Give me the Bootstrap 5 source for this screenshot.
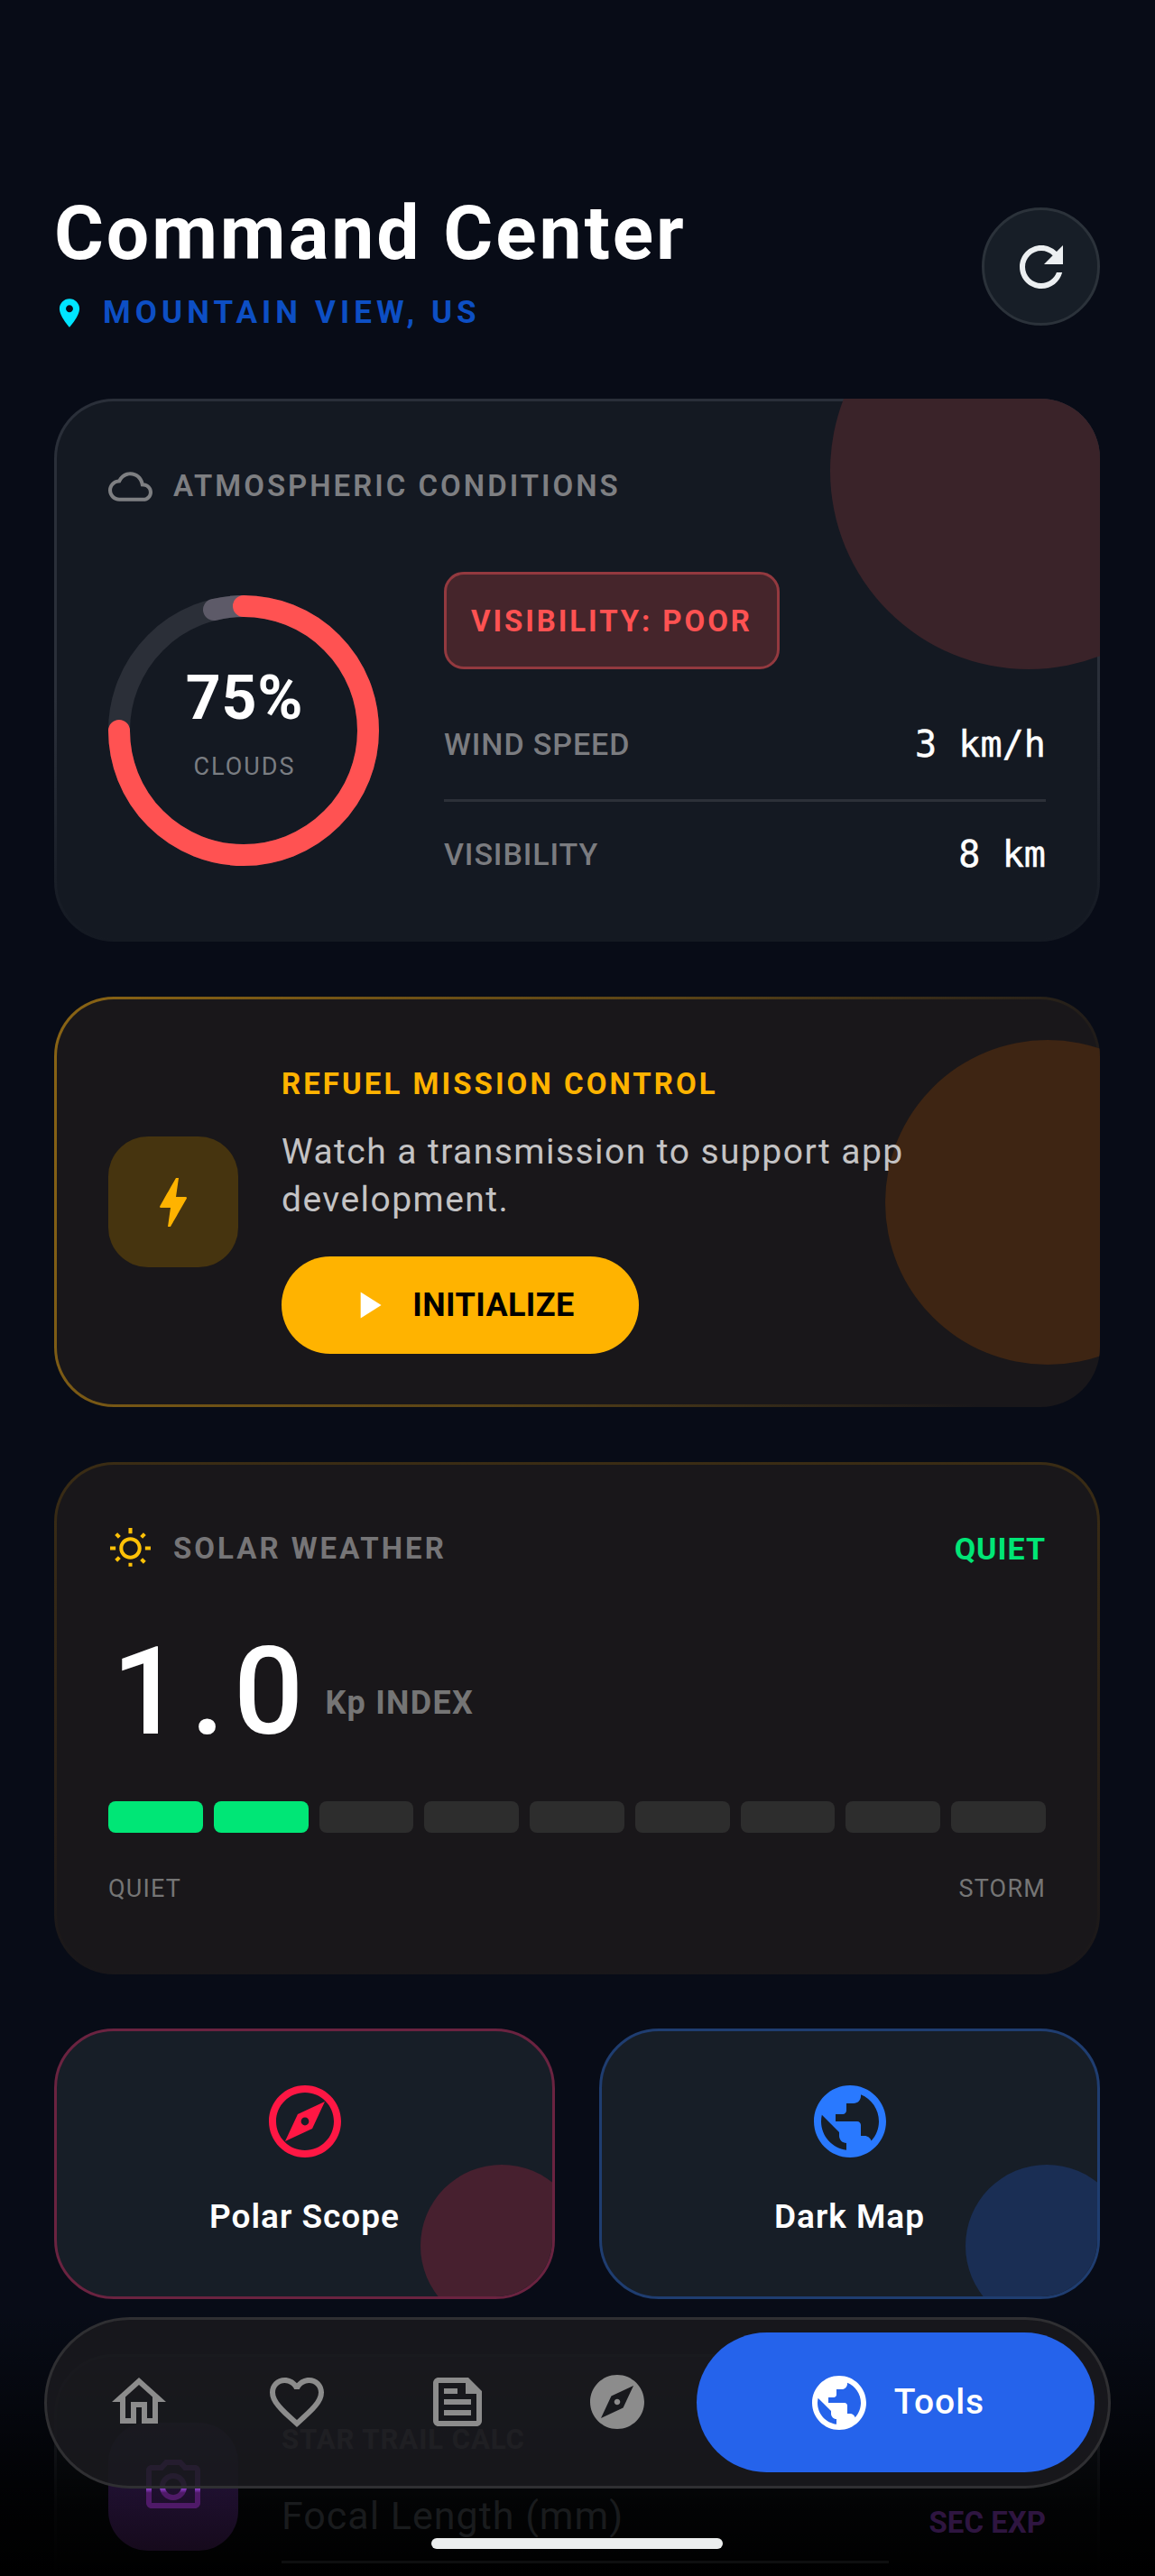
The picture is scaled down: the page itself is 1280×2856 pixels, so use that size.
<!DOCTYPE html>
<html lang="en">
<head>
  <meta charset="UTF-8">
  <title>Command Center</title>
  <link href="https://cdn.jsdelivr.net/npm/bootstrap@5.3.0/dist/css/bootstrap.min.css" rel="stylesheet">
  <style>
    html, body { height: 2856px; overflow: hidden; }
    body { background: #080c17; font-family: Roboto, "Liberation Sans", sans-serif; color: #fff; position: relative; }
    svg { display: block; fill: currentColor; flex: none; }
    .screen { padding: 209px 61px 0 60px; height: 2856px; overflow: hidden; }
    .page-title { font-size: 84px; font-weight: 700; line-height: 100px; letter-spacing: 2.9px; margin: 0; }
    .place { color: #0d4fc4; font-size: 35px; font-weight: 700; letter-spacing: 5.1px; line-height: 40px; margin-top: 18px; gap: 18px; }
    .place svg { color: #00e5ff; margin-left: -2px; }
    .refresh-btn { width: 131px; height: 131px; border-radius: 50%; background: #171e27; border: 3px solid #2b323a; color: #eceff1; margin-top: 21px; }
    .panel { position: relative; overflow: hidden; border-radius: 66px; border: 3px solid transparent; margin-top: 61px; }
    .blob { position: absolute; border-radius: 50%; }
    .panel > :not(.blob) { position: relative; }
    .panel-head { color: #7e7f82; font-size: 33px; font-weight: 600; letter-spacing: 3px; line-height: 58px; gap: 23px; }

    .air { height: 602px; padding: 65px 57px 0; margin-top: 75px; overflow: clip; overflow-clip-margin: border-box; background: linear-gradient(#141922, #141922) padding-box, linear-gradient(to bottom, #2a2f39, #2a2f39 55%, #141922) border-box; }
    .air .blob { width: 440px; height: 440px; left: 857px; top: -143px; background: #3a2329; }
    .air-body { margin-top: 66px; }
    .ring { width: 300px; height: 300px; position: relative; margin-top: 26px; }
    .ring-text { position: absolute; inset: 0; text-align: center; padding-left: 2px; }
    .ring-num { font-size: 68px; font-weight: 700; line-height: 78px; letter-spacing: .8px; margin-top: 75px; }
    .ring-lbl { font-size: 27px; letter-spacing: 2px; color: #7a7d82; line-height: 34px; margin-top: 20px; }
    .air-side { margin-left: 72px; width: 668px; }
    .vis-chip { display: inline-block; height: 108px; border-radius: 22px; border: 3px solid #93393f; background: #45252b; color: #ff5252; font-size: 33px; font-weight: 700; letter-spacing: 2.9px; line-height: 104px; padding: 0 27px; }
    .stat { font-size: 34px; font-weight: 500; letter-spacing: .9px; color: #7b7c80; }
    .stat-val { font-family: "DejaVu Sans Mono", monospace; font-size: 40px; color: #fff; font-weight: 400; letter-spacing: .1px; -webkit-text-stroke: .5px #fff; }
    .stat-a { margin-top: 60px; padding-bottom: 37px; line-height: 47px; border-bottom: 3px solid #2c3038; }
    .stat-b { padding-top: 35px; line-height: 47px; }

    .refuel { height: 455px; padding: 0 57px; overflow: clip; overflow-clip-margin: border-box; background: linear-gradient(#19171a, #19171a) padding-box, linear-gradient(115deg, #8a6414, #5a4416 50%, #19171a 90%) border-box; }
    .refuel .blob { width: 360px; height: 360px; left: 918px; top: 45px; background: #3e2513; }
    .tile-box { width: 144px; height: 145px; border-radius: 44px; }
    .bolt-box { background: #46340f; color: #ffb300; }
    .refuel-main { margin-left: 48px; padding-top: 18px; }
    .refuel-title { color: #ffb300; font-size: 33px; font-weight: 700; letter-spacing: 3.05px; line-height: 40px; }
    .refuel-text { color: #c4c3c4; font-size: 39px; letter-spacing: 1.45px; line-height: 53px; margin-top: 29px; width: 720px; }
    .go-btn { width: 396px; height: 108px; border-radius: 54px; background: #ffb300; border: 0; color: #000; font-size: 36px; font-weight: 700; letter-spacing: .4px; gap: 24px; margin-top: 36px; padding: 0; }
    .go-btn svg { color: #fff; }

    .solar { height: 568px; padding: 64px 57px 0; background: linear-gradient(#19171a, #19171a) padding-box, linear-gradient(to bottom, #3a2c14, #2a2118 60%, #19171a) border-box; }
    .solar .panel-head { font-weight: 700; color: #767577; }
    .sun { color: #ffc107; }
    .state-txt { color: #00e676; font-weight: 700; font-size: 34px; letter-spacing: 1px; }
    .kp-line { margin-top: 55px; height: 150px; gap: 14px; }
    .kp-num { font-size: 136px; font-weight: 500; letter-spacing: 10px; line-height: 150px; margin-left: 4px; }
    .kp-lbl { font-size: 36px; font-weight: 700; color: #757575; letter-spacing: 1.3px; margin-top: 24px; }
    .kp-bars { gap: 12px; margin-top: 46px; }
    .kp-bar { height: 35px; flex: 1; background: #2d2d2d; border-radius: 8px; }
    .kp-bar.on { background: #00e676; }
    .kp-ends { font-size: 27px; color: #757575; letter-spacing: 1.2px; margin-top: 45px; line-height: 34px; }

    .tile { flex: 1; height: 300px; background: #171e27; text-align: center; margin-top: 0; padding-top: 52px; }
    .tile-row { gap: 49px; margin-top: 60px; }
    .tile svg { margin: 0 auto; }
    .tile-name { font-size: 37px; font-weight: 600; letter-spacing: 1px; margin-top: 34px; line-height: 48px; color: #fff; }
    .tile .blob { width: 180px; height: 180px; left: 403px; top: 148px; }
    .tile-red { border-color: #6a2340; color: #ff1744; }
    .tile-red .blob { background: #47202f; }
    .tile-blue { border-color: #1f3d70; color: #2979ff; }
    .tile-blue .blob { background: #1a2e54; }

    /* card under the dock: bg gets the scrim, its content sits above the scrim with already dimmed colours */
    .trail { height: 260px; padding: 70px 57px 0; background: #141a22; border-color: #2a2f39; border-bottom: 0; border-radius: 66px 66px 0 0; }
    .trail > * { z-index: 1; }
    .cam-box { height: 142px; background: linear-gradient(to bottom, #26264a, #1f1030 50%, #160a1c); margin-top: 3px; flex: none; }
    .trail-body { margin-left: 48px; width: 673px; flex: none; }
    .trail-title { font-size: 31px; font-weight: 700; letter-spacing: 1px; color: #6a6a6a; line-height: 44px; }
    .trail-input { font-size: 43px; line-height: 60px; letter-spacing: 1px; color: #191b1d; margin-top: 32px; padding-bottom: 20px; border-bottom: 3px solid #0e0f10; }
    .trail-unit { color: #2e1540; font-size: 33px; font-weight: 700; margin-left: auto; margin-top: 89px; white-space: nowrap; }

    .scrim { position: absolute; left: 0; right: 0; top: 2560px; height: 296px; background: linear-gradient(to bottom, rgba(0,0,0,0) 0%, rgba(0,0,0,.55) 47%, rgba(0,0,0,.88) 74%, #000 100%); }
    .dock { position: absolute; z-index: 2; left: 49px; top: 2569px; width: 1182px; height: 190px; border-radius: 95px; border: 3px solid #2f2f32; background: rgba(25,25,29,.92); }
    .dock-icon { position: absolute; top: 55px; color: #8c8c8c; }
    .dock-on { position: absolute; left: 720px; top: 14px; width: 441px; height: 155px; border-radius: 78px; background: #2563eb; gap: 25px; font-size: 39px; font-weight: 500; letter-spacing: 1px; }
    .gesture { position: absolute; z-index: 3; left: 478px; top: 2814px; width: 323px; height: 12px; border-radius: 6px; background: #eceeee; }
  </style>
</head>
<body>
  <div class="screen">
    <div class="d-flex justify-content-between align-items-start">
      <div>
        <h1 class="page-title">Command Center</h1>
        <div class="place d-flex align-items-center">
          <svg width="38" height="38" viewBox="0 0 24 24"><path d="M12 2C8.13 2 5 5.13 5 9c0 5.25 7 13 7 13s7-7.75 7-13c0-3.87-3.13-7-7-7zm0 9.5c-1.38 0-2.5-1.12-2.5-2.5s1.12-2.5 2.5-2.5 2.5 1.12 2.5 2.5-1.12 2.5-2.5 2.5z"/></svg>
          <span>MOUNTAIN VIEW, US</span>
        </div>
      </div>
      <div class="refresh-btn d-flex align-items-center justify-content-center">
        <svg width="72" height="72" viewBox="0 0 24 24"><path d="M17.65 6.35C16.2 4.9 14.21 4 12 4c-4.42 0-7.99 3.58-7.99 8s3.57 8 7.99 8c3.73 0 6.84-2.55 7.73-6h-2.08c-.82 2.33-3.04 4-5.65 4-3.31 0-6-2.69-6-6s2.69-6 6-6c1.66 0 3.14.69 4.22 1.78L13 11h7V4l-2.35 2.35z"/></svg>
      </div>
    </div>

    <!-- atmospheric -->
    <div class="panel air">
      <div class="blob"></div>
      <div class="panel-head d-flex align-items-center">
        <svg width="49" height="49" viewBox="0 0 24 24"><path d="M19.35 10.04C18.67 6.59 15.64 4 12 4 9.11 4 6.6 5.64 5.35 8.04 2.34 8.36 0 10.91 0 14c0 3.31 2.69 6 6 6h13c2.76 0 5-2.24 5-5 0-2.64-2.05-4.78-4.65-4.96zM19 18H6c-2.21 0-4-1.79-4-4 0-2.05 1.53-3.76 3.56-3.97l1.07-.11.5-.95C8.08 7.14 9.94 6 12 6c2.62 0 4.88 1.86 5.39 4.43l.3 1.5 1.53.11c1.56.1 2.78 1.41 2.78 2.96 0 1.65-1.35 3-3 3z"/></svg>
        <span>ATMOSPHERIC CONDITIONS</span>
      </div>
      <div class="air-body d-flex align-items-start">
        <div class="ring">
          <svg width="300" height="300" viewBox="0 0 300 300">
            <circle cx="150" cy="150" r="138" fill="none" stroke="#2b2f38" stroke-width="24"/>
            <path d="M117 16 A138 138 0 0 1 150 12" fill="none" stroke="#5d5a68" stroke-width="24" stroke-linecap="round"/>
            <path d="M150 12 A138 138 0 1 1 12 150" fill="none" stroke="#ff5252" stroke-width="24" stroke-linecap="round"/>
          </svg>
          <div class="ring-text">
            <div class="ring-num">75%</div>
            <div class="ring-lbl">CLOUDS</div>
          </div>
        </div>
        <div class="air-side">
          <div class="vis-chip">VISIBILITY: POOR</div>
          <div class="stat stat-a d-flex justify-content-between"><span>WIND SPEED</span><span class="stat-val">3 km/h</span></div>
          <div class="stat stat-b d-flex justify-content-between"><span>VISIBILITY</span><span class="stat-val">8 km</span></div>
        </div>
      </div>
    </div>

    <!-- refuel -->
    <div class="panel refuel d-flex align-items-center">
      <div class="blob"></div>
      <div class="tile-box bolt-box d-flex align-items-center justify-content-center">
        <svg width="72" height="72" viewBox="0 0 24 24"><path d="M11 21h-1l1-7H7.5c-.58 0-.57-.32-.38-.66.19-.34.05-.08.07-.12C8.48 10.94 10.42 7.54 13 3h1l-1 7h3.5c.49 0 .56.33.47.51l-.07.15C12.96 17.55 11 21 11 21z"/></svg>
      </div>
      <div class="refuel-main">
        <div class="refuel-title">REFUEL MISSION CONTROL</div>
        <div class="refuel-text">Watch a transmission to support app development.</div>
        <button class="go-btn btn d-flex align-items-center justify-content-center">
          <svg width="50" height="50" viewBox="0 0 24 24"><path d="M8 5v14l11-7z"/></svg>
          <span>INITIALIZE</span>
        </button>
      </div>
    </div>

    <!-- solar -->
    <div class="panel solar">
      <div class="d-flex justify-content-between align-items-center">
        <div class="panel-head d-flex align-items-center">
          <svg class="sun" width="49" height="49" viewBox="0 0 24 24"><path d="M6.76 4.84l-1.8-1.79-1.41 1.41 1.79 1.79 1.42-1.41zM4 10.5H1v2h3v-2zm9-9.95h-2V3.5h2V.55zm7.45 3.91l-1.41-1.41-1.79 1.79 1.41 1.41 1.79-1.79zm-3.21 13.7l1.79 1.8 1.41-1.41-1.8-1.79-1.4 1.4zM20 10.5v2h3v-2h-3zm-8-5c-3.31 0-6 2.69-6 6s2.69 6 6 6 6-2.69 6-6-2.69-6-6-6zm0 10c-2.21 0-4-1.79-4-4s1.79-4 4-4 4 1.79 4 4-1.79 4-4 4zm-1 5.95h2V19.5h-2v2.95zm-7.45-3.91l1.41 1.41 1.79-1.8-1.41-1.41-1.79 1.8z"/></svg>
          <span>SOLAR WEATHER</span>
        </div>
        <span class="state-txt">QUIET</span>
      </div>
      <div class="kp-line d-flex align-items-center">
        <span class="kp-num">1.0</span>
        <span class="kp-lbl">Kp INDEX</span>
      </div>
      <div class="kp-bars d-flex">
        <div class="kp-bar on"></div><div class="kp-bar on"></div><div class="kp-bar"></div>
        <div class="kp-bar"></div><div class="kp-bar"></div><div class="kp-bar"></div>
        <div class="kp-bar"></div><div class="kp-bar"></div><div class="kp-bar"></div>
      </div>
      <div class="kp-ends d-flex justify-content-between"><span>QUIET</span><span>STORM</span></div>
    </div>

    <!-- quick tools -->
    <div class="tile-row d-flex">
      <div class="panel tile tile-red">
        <div class="blob"></div>
        <svg width="96" height="96" viewBox="0 0 24 24"><path d="M12 2C6.48 2 2 6.48 2 12s4.48 10 10 10 10-4.48 10-10S17.52 2 12 2zm0 18c-4.41 0-8-3.59-8-8s3.59-8 8-8 8 3.59 8 8-3.59 8-8 8zm-5.5-2.5l7.51-3.49L17.5 6.5 9.99 9.99 6.5 17.5zm5.5-6.6c.61 0 1.1.49 1.1 1.1s-.49 1.1-1.1 1.1-1.1-.49-1.1-1.1.49-1.1 1.1-1.1z"/></svg>
        <div class="tile-name">Polar Scope</div>
      </div>
      <div class="panel tile tile-blue">
        <div class="blob"></div>
        <svg width="96" height="96" viewBox="0 0 24 24"><path d="M12 2C6.48 2 2 6.48 2 12s4.48 10 10 10 10-4.48 10-10S17.52 2 12 2zm-1 17.93c-3.95-.49-7-3.85-7-7.93 0-.62.08-1.21.21-1.79L9 15v1c0 1.1.9 2 2 2v1.93zm6.9-2.54c-.26-.81-1-1.39-1.9-1.39h-1v-3c0-.55-.45-1-1-1H8v-2h2c.55 0 1-.45 1-1V7h2c1.1 0 2-.9 2-2v-.41c2.93 1.19 5 4.06 5 7.41 0 2.08-.8 3.97-2.1 5.39z"/></svg>
        <div class="tile-name">Dark Map</div>
      </div>
    </div>

    <!-- star trail, mostly under the dock -->
    <div class="panel trail d-flex align-items-start">
      <div class="tile-box cam-box d-flex align-items-center justify-content-center">
        <svg width="72" height="72" viewBox="0 0 24 24">
          <defs><linearGradient id="camFade" gradientUnits="userSpaceOnUse" x1="0" y1="2" x2="0" y2="20"><stop offset="0.55" stop-color="#b050ff"/><stop offset="0.68" stop-color="#4f1a68"/></linearGradient></defs>
          <path fill="url(#camFade)" d="M20 4h-3.17L15 2H9L7.17 4H4c-1.1 0-2 .9-2 2v12c0 1.1.9 2 2 2h16c1.1 0 2-.9 2-2V6c0-1.1-.9-2-2-2zm0 14H4V6h4.05l1.83-2h4.24l1.83 2H20v12zM12 7c-2.76 0-5 2.24-5 5s2.24 5 5 5 5-2.24 5-5-2.24-5-5-5zm0 8c-1.65 0-3-1.35-3-3s1.35-3 3-3 3 1.35 3 3-1.35 3-3 3z"/>
        </svg>
      </div>
      <div class="trail-body">
        <div class="trail-title">STAR TRAIL CALC</div>
        <div class="trail-input">Focal Length (mm)</div>
      </div>
      <div class="trail-unit">SEC EXP</div>
    </div>
  </div>

  <div class="scrim"></div>

  <div class="dock">
    <svg class="dock-icon" style="left:66px" width="72" height="72" viewBox="0 0 24 24"><path d="M12 5.69l5 4.5V18h-2v-6H9v6H7v-7.81l5-4.5M12 3L2 12h3v8h6v-6h2v6h6v-8h3L12 3z"/></svg>
    <svg class="dock-icon" style="left:241px" width="72" height="72" viewBox="0 0 24 24"><path d="M16.5 3c-1.74 0-3.41.81-4.5 2.09C10.91 3.81 9.24 3 7.5 3 4.42 3 2 5.42 2 8.5c0 3.78 3.4 6.86 8.55 11.54L12 21.35l1.45-1.32C18.6 15.36 22 12.28 22 8.5 22 5.42 19.58 3 16.5 3zm-4.4 15.55l-.1.1-.1-.1C7.14 14.24 4 11.39 4 8.5 4 6.5 5.5 5 7.5 5c1.54 0 3.04.99 3.57 2.36h1.87C13.46 5.99 14.96 5 16.5 5c2 0 3.5 1.5 3.5 3.5 0 2.89-3.14 5.74-7.9 10.05z"/></svg>
    <svg class="dock-icon" style="left:419px" width="72" height="72" viewBox="0 0 24 24"><path d="M16 3H5c-1.1 0-2 .9-2 2v14c0 1.1.9 2 2 2h14c1.1 0 2-.9 2-2V8l-5-5zm3 16H5V5h10v4h4v10zM7 17h10v-2H7v2zm5-10H7v2h5V7zm-5 6h10v-2H7v2z"/></svg>
    <svg class="dock-icon" style="left:596px" width="72" height="72" viewBox="0 0 24 24"><path d="M12 10.9c-.61 0-1.1.49-1.1 1.1s.49 1.1 1.1 1.1c.61 0 1.1-.49 1.1-1.1s-.49-1.1-1.1-1.1zM12 2C6.48 2 2 6.48 2 12s4.48 10 10 10 10-4.48 10-10S17.52 2 12 2zm2.19 12.19L6 18l3.81-8.19L18 6l-3.81 8.19z"/></svg>
    <div class="dock-on d-flex align-items-center justify-content-center">
      <svg width="72" height="72" viewBox="0 0 24 24"><path d="M12 2C6.48 2 2 6.48 2 12s4.48 10 10 10 10-4.48 10-10S17.52 2 12 2zm-1 17.93c-3.95-.49-7-3.85-7-7.93 0-.62.08-1.21.21-1.79L9 15v1c0 1.1.9 2 2 2v1.93zm6.9-2.54c-.26-.81-1-1.39-1.9-1.39h-1v-3c0-.55-.45-1-1-1H8v-2h2c.55 0 1-.45 1-1V7h2c1.1 0 2-.9 2-2v-.41c2.93 1.19 5 4.06 5 7.41 0 2.08-.8 3.97-2.1 5.39z"/></svg>
      <span>Tools</span>
    </div>
  </div>
  <div class="gesture"></div>

  <script src="https://cdn.jsdelivr.net/npm/bootstrap@5.3.0/dist/js/bootstrap.bundle.min.js"></script>
</body>
</html>
